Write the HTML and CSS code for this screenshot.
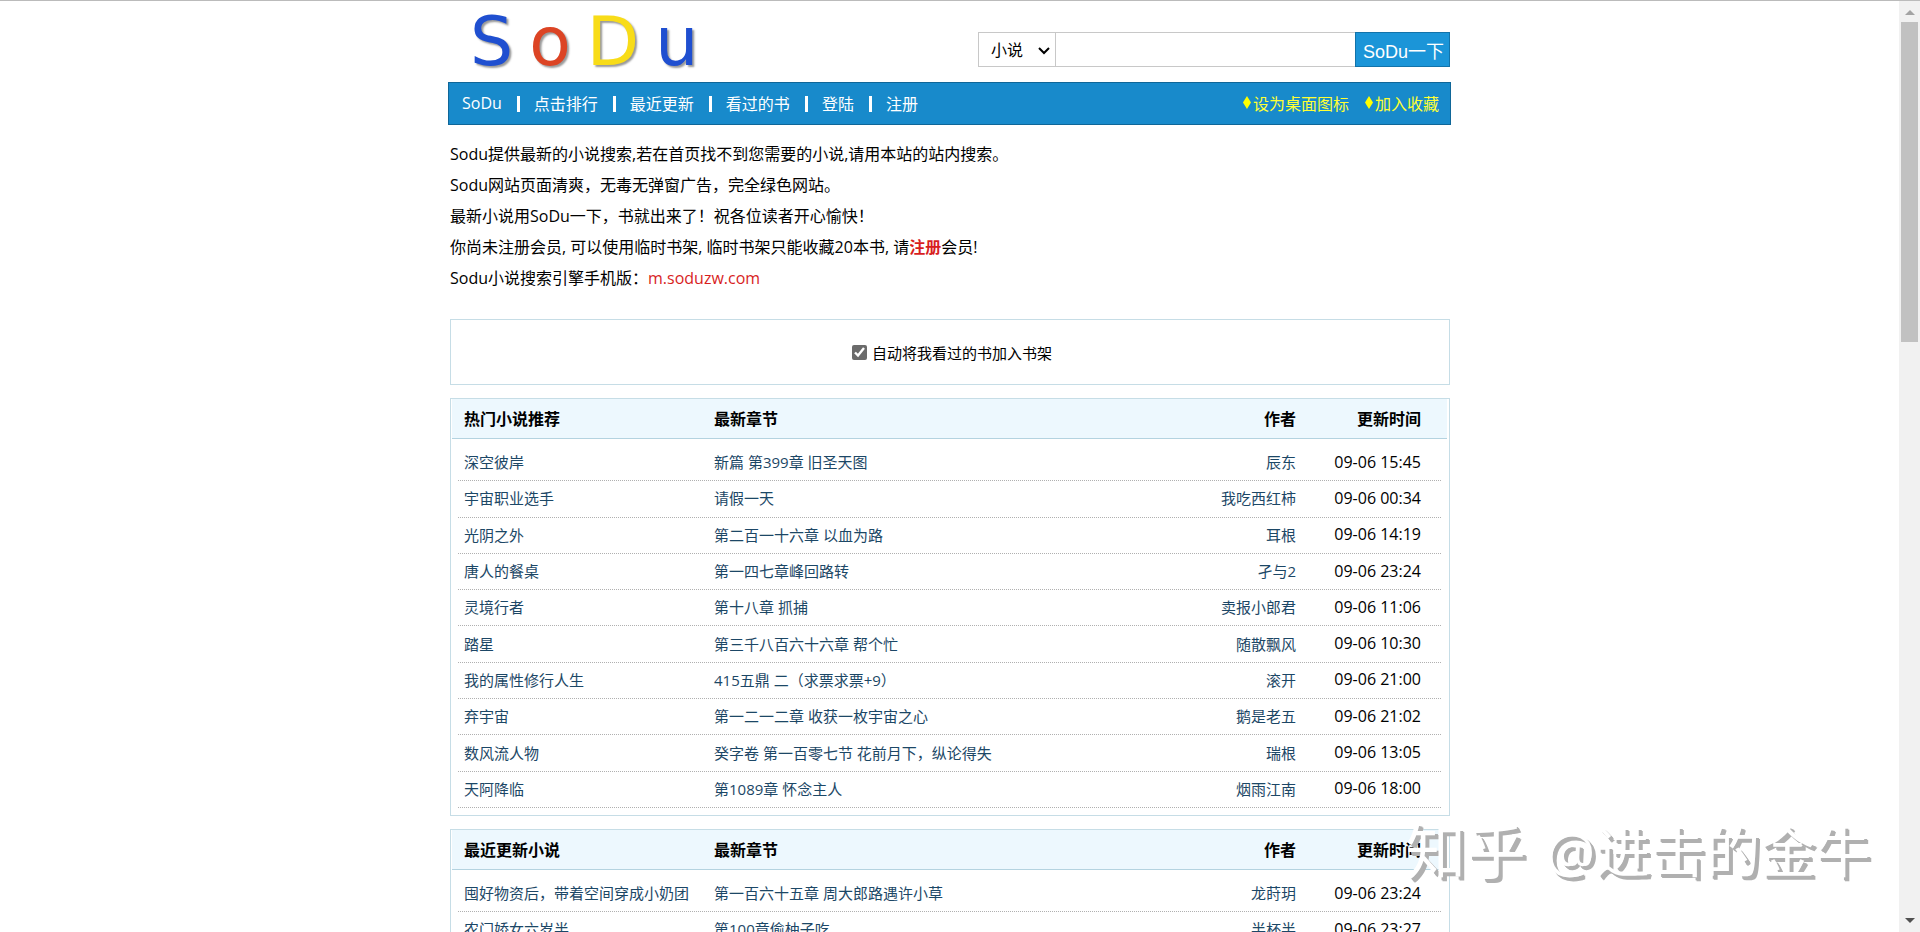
FILE: index.html
```
<!DOCTYPE html>
<html lang="zh-CN">
<head>
    <meta charset="UTF-8">
    <meta name="viewport" content="width=device-width, initial-scale=1.0">
    <title>SoDu小说搜索</title>
    <link rel="stylesheet" href="styles.css">
</head>
<body>
    <div id="page">
        <header class="top">
            <a class="logo" href="#" aria-label="SoDu"><span class="blue">S</span><span class="red">o</span><span class="yellow">D</span><span class="blue">u</span></a>
            <form class="search">
                <div class="type">
                    <select name="type" aria-label="搜索类型">
                        <option>小说</option>
                        <option>作者</option>
                    </select>
                    <svg width="12" height="8" viewBox="0 0 12 8"><path d="M1 1l5 5 5-5" fill="none" stroke="#000" stroke-width="2"/></svg>
                </div>
                <input type="text" name="key" aria-label="关键字">
                <button type="submit">SoDu一下</button>
            </form>
        </header>

        <nav class="menu">
            <ul>
                <li><a href="#">SoDu</a></li>
                <li><a href="#">点击排行</a></li>
                <li><a href="#">最近更新</a></li>
                <li><a href="#">看过的书</a></li>
                <li><a href="#">登陆</a></li>
                <li><a href="#">注册</a></li>
            </ul>
            <div class="tools">
                <a href="#">设为桌面图标</a>
                <a href="#">加入收藏</a>
            </div>
        </nav>

        <div class="intro">
            <p>Sodu提供最新的小说搜索,若在首页找不到您需要的小说,请用本站的站内搜索。</p>
            <p>Sodu网站页面清爽，无毒无弹窗广告，完全绿色网站。</p>
            <p>最新小说用SoDu一下，书就出来了！祝各位读者开心愉快！</p>
            <p>你尚未注册会员, 可以使用临时书架, 临时书架只能收藏20本书, 请<a href="#"><b>注册</b></a>会员!</p>
            <p>Sodu小说搜索引擎手机版：<a href="#">m.soduzw.com</a></p>
        </div>

        <div class="panel auto">
            <input type="checkbox" id="auto-add" checked>
            <label for="auto-add">自动将我看过的书加入书架</label>
        </div>

        <table class="panel books hot">
            <thead>
                <tr><th>热门小说推荐</th><th>最新章节</th><th>作者</th><th>更新时间</th></tr>
            </thead>
            <tbody>
                <tr><td><a href="#">深空彼岸</a></td><td><a href="#">新篇 第399章 旧圣天图</a></td><td><a href="#">辰东</a></td><td>09-06 15:45</td></tr>
                <tr><td><a href="#">宇宙职业选手</a></td><td><a href="#">请假一天</a></td><td><a href="#">我吃西红柿</a></td><td>09-06 00:34</td></tr>
                <tr><td><a href="#">光阴之外</a></td><td><a href="#">第二百一十六章 以血为路</a></td><td><a href="#">耳根</a></td><td>09-06 14:19</td></tr>
                <tr><td><a href="#">唐人的餐桌</a></td><td><a href="#">第一四七章峰回路转</a></td><td><a href="#">孑与2</a></td><td>09-06 23:24</td></tr>
                <tr><td><a href="#">灵境行者</a></td><td><a href="#">第十八章 抓捕</a></td><td><a href="#">卖报小郎君</a></td><td>09-06 11:06</td></tr>
                <tr><td><a href="#">踏星</a></td><td><a href="#">第三千八百六十六章 帮个忙</a></td><td><a href="#">随散飘风</a></td><td>09-06 10:30</td></tr>
                <tr><td><a href="#">我的属性修行人生</a></td><td><a href="#">415五鼎 二（求票求票+9）</a></td><td><a href="#">滚开</a></td><td>09-06 21:00</td></tr>
                <tr><td><a href="#">弃宇宙</a></td><td><a href="#">第一二一二章 收获一枚宇宙之心</a></td><td><a href="#">鹅是老五</a></td><td>09-06 21:02</td></tr>
                <tr><td><a href="#">数风流人物</a></td><td><a href="#">癸字卷 第一百零七节 花前月下，纵论得失</a></td><td><a href="#">瑞根</a></td><td>09-06 13:05</td></tr>
                <tr><td><a href="#">天阿降临</a></td><td><a href="#">第1089章 怀念主人</a></td><td><a href="#">烟雨江南</a></td><td>09-06 18:00</td></tr>
            </tbody>
        </table>

        <table class="panel books">
            <thead>
                <tr><th>最近更新小说</th><th>最新章节</th><th>作者</th><th>更新时间</th></tr>
            </thead>
            <tbody>
                <tr><td><a href="#">囤好物资后，带着空间穿成小奶团</a></td><td><a href="#">第一百六十五章 周大郎路遇许小草</a></td><td><a href="#">龙莳玥</a></td><td>09-06 23:24</td></tr>
                <tr><td><a href="#">农门娇女六岁半</a></td><td><a href="#">第100章偷柚子吃</a></td><td><a href="#">半杯半</a></td><td>09-06 23:27</td></tr>
            </tbody>
        </table>
    </div>

    <div class="watermark"><span class="site">知乎</span><span>@进击的金牛</span></div>

    <div class="scrollbar">
        <svg width="10" height="5" viewBox="0 0 10 5"><path d="M0 5l5-5 5 5z" fill="#a3a3a3"/></svg>
        <div class="thumb"></div>
        <svg width="10" height="5" viewBox="0 0 10 5"><path d="M0 0l5 5 5-5z" fill="#505050"/></svg>
    </div>
</body>
</html>
```

FILE: styles.css
```
* {
    box-sizing: border-box;
}
html {
    height: 100%;
    overflow: hidden;
}
body {
    height: 100%;
    margin: 0;
    padding-right: 21px; /* room for the scrollbar */
    border-top: 1px solid #bbb;
    overflow: hidden;
    background: #fff;
    color: #000;
    font-family: "Open Sans", "Noto Sans CJK SC", sans-serif;
    font-size: 16px;
}
a {
    text-decoration: none;
}
#page {
    max-width: 1003px;
    margin: 0 auto;
}

/* logo and search */
.top {
    display: flex;
    justify-content: space-between;
    align-items: center;
    height: 81px;
    padding: 0 1px 0 22px;
}
.logo {
    display: flex;
    gap: 16px;
    font-family: "DejaVu Sans", sans-serif;
    font-size: 68px;
    line-height: 76px;
    text-shadow: 2px 2px 2px #999;
}
.blue {
    color: #1f4fd0;
}
.red {
    color: #dc4424;
}
.yellow {
    color: #f8dc18;
}
.search {
    display: flex;
    width: 472px;
    height: 35px;
    margin-top: 16px;
}
.type {
    position: relative;
    width: 78px;
    border: 1px solid #c8c8c8;
}
.type select {
    width: 100%;
    height: 100%;
    padding: 0 0 0 12px;
    border: none;
    background: #fff;
    appearance: none;
    font: inherit;
    color: #000;
}
.type svg {
    position: absolute;
    right: 5px;
    top: 14px;
    pointer-events: none;
}
.search input {
    flex: 1;
    min-width: 0;
    border: 1px solid #c8c8c8;
    border-width: 1px 0;
    padding: 0 8px;
    font: inherit;
}
.search button {
    width: 95px;
    padding: 0 0 0 2px;
    border: 1px solid #1273aa;
    background: #1b95d8;
    color: #fff;
    font-family: "Liberation Sans", "Noto Sans CJK SC", sans-serif;
    font-size: 18px;
    white-space: nowrap;
    cursor: pointer;
}

/* blue menu bar */
.menu {
    display: flex;
    justify-content: space-between;
    align-items: center;
    height: 43px;
    padding: 0 11px 2px 13px;
    border: 1px solid #0f6698;
    background: #188acb;
}
.menu ul {
    display: flex;
    margin: 0;
    padding: 0;
    list-style: none;
}
.menu li {
    display: flex;
    align-items: center;
}
.menu li + li::before {
    content: "";
    width: 3px;
    height: 16px;
    margin: 2px 14px 0 15px;
    background: #fff;
}
.menu a {
    color: #fff;
}
.tools {
    display: flex;
    gap: 16px;
}
.menu .tools a {
    display: flex;
    align-items: center;
    gap: 2px;
    color: #ff3;
}
.tools a::before {
    content: "";
    width: 8px;
    height: 13px;
    background: #ff0;
    clip-path: polygon(50% 0, 100% 50%, 50% 100%, 0 50%);
}

.intro {
    padding: 14px 2px 25px;
    line-height: 31px;
}
.intro p {
    margin: 0;
}
.intro a {
    color: #d81e1e;
}

.panel {
    margin: 0 1px 13px 2px;
    border: 1px solid #c6dde6;
}
.auto {
    display: flex;
    justify-content: center;
    align-items: center;
    gap: 5px;
    height: 66px;
    padding-left: 4px;
    font-size: 15px;
}
.auto input {
    width: 15px;
    height: 15px;
    margin: 0;
    accent-color: #6b6b6b;
}

/* book lists */
.books,
.books thead {
    display: block;
}
.books tr {
    display: grid;
    grid-template-columns: 250px minmax(0, 1fr) 120px 125px;
    align-items: center;
}
.books th,
.books td {
    padding: 0;
    text-align: left;
    white-space: nowrap;
}
.books th:nth-child(n+3),
.books td:nth-child(n+3) {
    text-align: right;
}
.books thead tr {
    height: 40px;
    margin: 0 2px 0 1px;
    padding: 0 26px 2px 12px;
    border-bottom: 1px solid #b4d3e0;
    background: #edf8fe;
}
.books tbody {
    display: grid;
    padding: 6px 8px 7px 7px;
}
.books tbody tr {
    min-height: 36px;
    padding: 0 20px 2px 6px;
    border-bottom: 1px dotted #b0b0b0;
    font-size: 15px;
}
.books td:last-child {
    font-size: 16px;
}
.books a {
    color: #1c4766;
}
.hot tbody {
    height: 376px;
    grid-auto-rows: 1fr;
}

.watermark {
    position: fixed;
    right: 50px;
    bottom: 41px;
    display: flex;
    align-items: center;
    gap: 20px;
    color: #fff;
    font-size: 55px;
    line-height: 80px;
    text-shadow: 3px 3px 0 #b0b0b0, 4px 4px 0 #b0b0b0;
    pointer-events: none;
}
.site {
    font-size: 60px;
}

.scrollbar {
    position: fixed;
    top: 1px;
    right: 0;
    bottom: 0;
    display: flex;
    flex-direction: column;
    align-items: center;
    width: 21px;
    padding: 9px 0;
    background: #f1f1f1;
}
.thumb {
    width: 17px;
    height: 320px;
    margin: 7px 0 auto;
    background: #c1c1c1;
}
```
